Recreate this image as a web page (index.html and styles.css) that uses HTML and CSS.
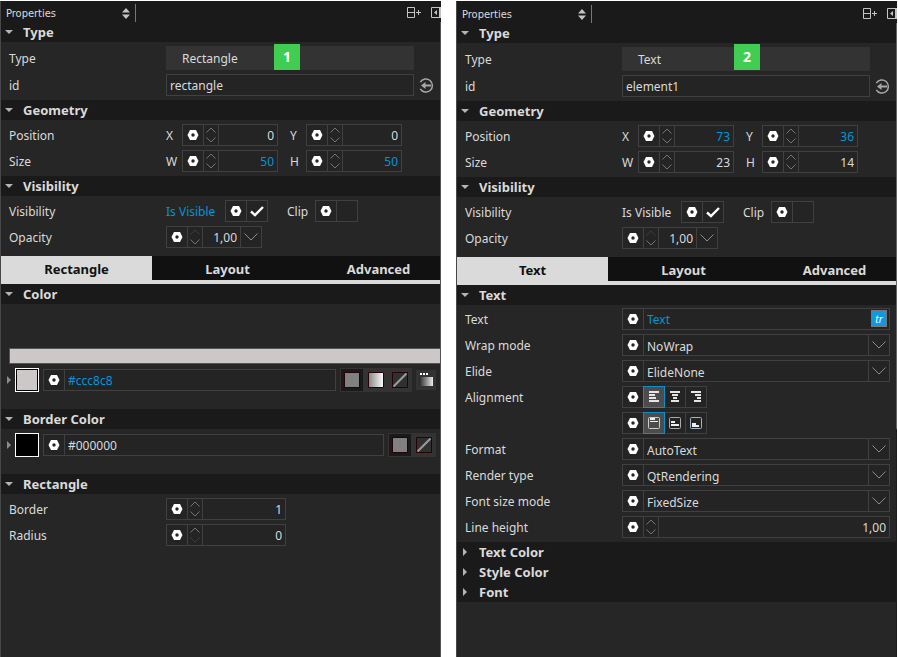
FILE: index.html
```html
<!DOCTYPE html>
<html lang="en">
<head>
<meta charset="utf-8">
<title>Properties</title>
<link rel="stylesheet" href="styles.css">
</head>
<body>
<svg class="defs" aria-hidden="true">
  <symbol id="hex" viewBox="0 0 12 10"><path fill="#fff" fill-rule="evenodd" d="M.5 5 3 0h6l2.500 5L9 10H3zM6 3.300a1.700 1.700 0 1 0 0 3.400a1.700 1.700 0 1 0 0-3.400z"/></symbol>
  <symbol id="up" viewBox="0 0 10 6"><path class="line" d="M.5 5.500 5 1l4.500 4.500"/></symbol>
  <symbol id="down" viewBox="0 0 10 6"><path class="line" d="M.5.5 5 5 9.500.5"/></symbol>
  <symbol id="chev" viewBox="0 0 14 8"><path class="line" d="M.5.5 7 7 13.500.5"/></symbol>
  <symbol id="check" viewBox="0 0 14 11"><path d="M1 5.500 5 9.200 13 1" fill="none" stroke="#fff" stroke-width="2.400"/></symbol>
  <symbol id="sort" viewBox="0 0 8 11"><path fill="#c4c4c4" d="M4 0l4 4.500H0zM4 11 0 6.500h8z"/></symbol>
  <symbol id="split" viewBox="0 0 15 12"><path fill="none" stroke="#c4c4c4" d="M.5.5h7v10h-7zM.5 5.500h7M9 5.500h5M11.500 3v5"/></symbol>
  <symbol id="dock" viewBox="0 0 10 12"><path fill="none" stroke="#c4c4c4" d="M9 .5H.5v10H9"/><path fill="#c4c4c4" d="M6 3v5L3 5.500zM8 0h2v11H8z"/></symbol>
  <symbol id="reset" viewBox="0 0 15 15"><path fill="none" stroke="#a8a8a8" stroke-width="1.500" d="M1.300 4.200A6.500 6.500 0 1 1 1.300 10.800"/><path fill="#a8a8a8" d="M2 7.500 6.500 4v2.500H12v2H6.500V11z"/></symbol>
  <symbol id="slash" viewBox="0 0 16 16"><path fill="#303030" stroke="#260205" d="M.5.5h15v15H.5z"/><path stroke="#999" stroke-width="2.200" d="M1.500 14.500l13-13"/></symbol>
  <symbol id="solid" viewBox="0 0 16 16"><path fill="#808080" stroke="#260205" d="M.5.5h15v15H.5z"/></symbol>
  <symbol id="grad" viewBox="0 0 16 16"><path fill="url(#g1)" stroke="#260205" d="M.5.5h15v15H.5z"/></symbol>
  <symbol id="stops" viewBox="0 0 14 14"><path fill="#fff" d="M1 0h2v2H1zM4 0h2v2H4zM7 0h2v2H7z"/><path fill="url(#g2)" d="M0 4h14v9H0z"/></symbol>
  <symbol id="al" viewBox="0 0 12 12"><path fill="#e4e4e4" d="M1 0h10v2H1zM1 3h6v2H1zM1 6h7v2H1zM1 9h10v2H1z"/></symbol>
  <symbol id="ac" viewBox="0 0 12 12"><path fill="#e4e4e4" d="M1 0h10v2H1zM3 3h6v2H3zM4 6h4v2H4zM2 9h8v2H2z"/></symbol>
  <symbol id="ar" viewBox="0 0 12 12"><path fill="#e4e4e4" d="M1 0h10v2H1zM5 3h6v2H5zM7 6h4v2H7zM4 9h7v2H4z"/></symbol>
  <symbol id="vt" viewBox="0 0 12 12"><rect x=".5" y=".5" width="11" height="11" rx="1" fill="none" stroke="#ccc"/><path fill="#eee" d="M2 1h5v2H2zM2 4h8v1H2z"/></symbol>
  <symbol id="vm" viewBox="0 0 12 12"><rect x=".5" y=".5" width="11" height="11" rx="1" fill="none" stroke="#aaa"/><path fill="#eee" d="M2 4h4v2H2zM2 7h8v2H2z"/></symbol>
  <symbol id="vb" viewBox="0 0 12 12"><rect x=".5" y=".5" width="11" height="11" rx="1" fill="none" stroke="#a4b4c4"/><path fill="#eee" d="M2 6h4v2H2zM2 8h7v2H2z"/></symbol>
  <linearGradient id="g1"><stop stop-color="#858585"/><stop offset="1" stop-color="#fff"/></linearGradient>
  <linearGradient id="g2"><stop stop-color="#252222"/><stop offset="1" stop-color="#eee"/></linearGradient>
</svg>

<main class="page">
<section class="panel" aria-label="Rectangle properties">
  <header class="toolbar">
    <label class="view"><select aria-label="View"><option>Properties</option></select><svg width="8" height="11"><use href="#sort"/></svg></label>
    <div class="tools">
      <button aria-label="Split"><svg width="15" height="12"><use href="#split"/></svg></button>
      <button aria-label="Close"><svg width="10" height="12"><use href="#dock"/></svg></button>
    </div>
  </header>
  <div class="props">
    <h2><button class="head open">Type</button></h2>
    <div class="body">
      <div class="row tall"><span class="name">Type</span><button class="type">Rectangle</button><span class="badge">1</span></div>
      <div class="row"><label class="name" for="id1">id</label><span class="box idbox"><input id="id1" value="rectangle"></span><button class="reset" aria-label="Reset id"><svg width="15" height="15"><use href="#reset"/></svg></button></div>
    </div>
    <h2><button class="head open">Geometry</button></h2>
    <div class="body">
      <div class="row"><span class="name">Position</span>
        <label class="axis" for="x1">X</label><span class="box num"><button class="hex" aria-label="Actions"><svg><use href="#hex"/></svg></button><span class="spin"><button aria-label="Increase"><svg><use href="#up"/></svg></button><button aria-label="Decrease"><svg><use href="#down"/></svg></button></span><input id="x1" value="0"></span>
        <label class="axis second" for="y1">Y</label><span class="box num"><button class="hex" aria-label="Actions"><svg><use href="#hex"/></svg></button><span class="spin"><button aria-label="Increase"><svg><use href="#up"/></svg></button><button aria-label="Decrease"><svg><use href="#down"/></svg></button></span><input id="y1" value="0"></span>
      </div>
      <div class="row"><span class="name">Size</span>
        <label class="axis" for="w1">W</label><span class="box num"><button class="hex" aria-label="Actions"><svg><use href="#hex"/></svg></button><span class="spin"><button aria-label="Increase"><svg><use href="#up"/></svg></button><button aria-label="Decrease"><svg><use href="#down"/></svg></button></span><input class="set" id="w1" value="50"></span>
        <label class="axis second" for="h1">H</label><span class="box num"><button class="hex" aria-label="Actions"><svg><use href="#hex"/></svg></button><span class="spin"><button aria-label="Increase"><svg><use href="#up"/></svg></button><button aria-label="Decrease"><svg><use href="#down"/></svg></button></span><input class="set" id="h1" value="50"></span>
      </div>
    </div>
    <h2><button class="head open">Visibility</button></h2>
    <div class="body last">
      <div class="row"><span class="name">Visibility</span>
        <label class="vis set" for="v1">Is Visible</label><span class="box"><button class="hex" aria-label="Actions"><svg><use href="#hex"/></svg></button><span class="tick"><input type="checkbox" id="v1" checked><svg width="14" height="11"><use href="#check"/></svg></span></span>
        <label class="clip" for="c1">Clip</label><span class="box"><button class="hex" aria-label="Actions"><svg><use href="#hex"/></svg></button><span class="tick"><input type="checkbox" id="c1"></span></span>
      </div>
      <div class="row"><label class="name" for="o1">Opacity</label><span class="box opacity"><button class="hex" aria-label="Actions"><svg><use href="#hex"/></svg></button><span class="spin"><button class="off" aria-label="Increase"><svg><use href="#up"/></svg></button><button aria-label="Decrease"><svg><use href="#down"/></svg></button></span><input id="o1" value="1,00"><button class="drop" aria-label="Slider"><svg><use href="#chev"/></svg></button></span></div>
    </div>
    <div class="tabs" role="tablist"><button role="tab" aria-selected="true">Rectangle</button><button role="tab">Layout</button><button role="tab">Advanced</button></div>
    <h2><button class="head open">Color</button></h2>
    <div class="colors">
      <div class="bar"></div>
      <div class="crow"><button class="more" aria-label="Expand"></button><button class="swatch gray" aria-label="Color"></button><span class="box grow"><button class="hex" aria-label="Actions"><svg><use href="#hex"/></svg></button><input class="set" aria-label="Color value" value="#ccc8c8"></span>
        <span class="modes"><button class="on" aria-label="Solid"><svg><use href="#solid"/></svg></button><button aria-label="Gradient"><svg><use href="#grad"/></svg></button><button aria-label="None"><svg><use href="#slash"/></svg></button></span>
        <button class="picker" aria-label="Gradient presets"><svg width="14" height="14"><use href="#stops"/></svg></button></div>
    </div>
    <h2><button class="head open">Border Color</button></h2>
    <div class="colors">
      <div class="crow"><button class="more" aria-label="Expand"></button><button class="swatch black" aria-label="Border color"></button><span class="box grow"><button class="hex" aria-label="Actions"><svg><use href="#hex"/></svg></button><input aria-label="Border color value" value="#000000"></span>
        <span class="modes"><button class="on" aria-label="Solid"><svg><use href="#solid"/></svg></button><button aria-label="None"><svg><use href="#slash"/></svg></button></span></div>
    </div>
    <h2><button class="head open">Rectangle</button></h2>
    <div class="body">
      <div class="row"><label class="name" for="b1">Border</label><span class="box wide"><button class="hex" aria-label="Actions"><svg><use href="#hex"/></svg></button><span class="spin"><button aria-label="Increase"><svg><use href="#up"/></svg></button><button aria-label="Decrease"><svg><use href="#down"/></svg></button></span><input id="b1" value="1"></span></div>
      <div class="row"><label class="name" for="r1">Radius</label><span class="box wide"><button class="hex" aria-label="Actions"><svg><use href="#hex"/></svg></button><span class="spin"><button aria-label="Increase"><svg><use href="#up"/></svg></button><button class="off" aria-label="Decrease"><svg><use href="#down"/></svg></button></span><input id="r1" value="0"></span></div>
    </div>
  </div>
</section>

<section class="panel text-panel" aria-label="Text properties">
  <header class="toolbar">
    <label class="view"><select aria-label="View"><option>Properties</option></select><svg width="8" height="11"><use href="#sort"/></svg></label>
    <div class="tools">
      <button aria-label="Split"><svg width="15" height="12"><use href="#split"/></svg></button>
      <button aria-label="Close"><svg width="10" height="12"><use href="#dock"/></svg></button>
    </div>
  </header>
  <div class="props">
    <h2><button class="head open">Type</button></h2>
    <div class="body">
      <div class="row tall"><span class="name">Type</span><button class="type">Text</button><span class="badge">2</span></div>
      <div class="row"><label class="name" for="id2">id</label><span class="box idbox"><input id="id2" value="element1"></span><button class="reset" aria-label="Reset id"><svg width="15" height="15"><use href="#reset"/></svg></button></div>
    </div>
    <h2><button class="head open">Geometry</button></h2>
    <div class="body">
      <div class="row"><span class="name">Position</span>
        <label class="axis" for="x2">X</label><span class="box num"><button class="hex" aria-label="Actions"><svg><use href="#hex"/></svg></button><span class="spin"><button aria-label="Increase"><svg><use href="#up"/></svg></button><button aria-label="Decrease"><svg><use href="#down"/></svg></button></span><input class="set" id="x2" value="73"></span>
        <label class="axis second" for="y2">Y</label><span class="box num"><button class="hex" aria-label="Actions"><svg><use href="#hex"/></svg></button><span class="spin"><button aria-label="Increase"><svg><use href="#up"/></svg></button><button aria-label="Decrease"><svg><use href="#down"/></svg></button></span><input class="set" id="y2" value="36"></span>
      </div>
      <div class="row"><span class="name">Size</span>
        <label class="axis" for="w2">W</label><span class="box num"><button class="hex" aria-label="Actions"><svg><use href="#hex"/></svg></button><span class="spin"><button aria-label="Increase"><svg><use href="#up"/></svg></button><button aria-label="Decrease"><svg><use href="#down"/></svg></button></span><input id="w2" value="23"></span>
        <label class="axis second" for="h2">H</label><span class="box num"><button class="hex" aria-label="Actions"><svg><use href="#hex"/></svg></button><span class="spin"><button aria-label="Increase"><svg><use href="#up"/></svg></button><button aria-label="Decrease"><svg><use href="#down"/></svg></button></span><input id="h2" value="14"></span>
      </div>
    </div>
    <h2><button class="head open">Visibility</button></h2>
    <div class="body last">
      <div class="row"><span class="name">Visibility</span>
        <label class="vis" for="v2">Is Visible</label><span class="box"><button class="hex" aria-label="Actions"><svg><use href="#hex"/></svg></button><span class="tick"><input type="checkbox" id="v2" checked><svg width="14" height="11"><use href="#check"/></svg></span></span>
        <label class="clip" for="c2">Clip</label><span class="box"><button class="hex" aria-label="Actions"><svg><use href="#hex"/></svg></button><span class="tick"><input type="checkbox" id="c2"></span></span>
      </div>
      <div class="row"><label class="name" for="o2">Opacity</label><span class="box opacity"><button class="hex" aria-label="Actions"><svg><use href="#hex"/></svg></button><span class="spin"><button class="off" aria-label="Increase"><svg><use href="#up"/></svg></button><button aria-label="Decrease"><svg><use href="#down"/></svg></button></span><input id="o2" value="1,00"><button class="drop" aria-label="Slider"><svg><use href="#chev"/></svg></button></span></div>
    </div>
    <div class="tabs" role="tablist"><button role="tab" aria-selected="true">Text</button><button role="tab">Layout</button><button role="tab">Advanced</button></div>
    <h2><button class="head open">Text</button></h2>
    <div class="body text-body">
      <div class="row"><label class="name" for="t2">Text</label><span class="box grow"><button class="hex" aria-label="Actions"><svg><use href="#hex"/></svg></button><input class="set" id="t2" value="Text"><button class="tr">tr</button></span></div>
      <div class="row"><label class="name" for="wm">Wrap mode</label><span class="box grow"><button class="hex" aria-label="Actions"><svg><use href="#hex"/></svg></button><select id="wm"><option>NoWrap</option></select><span class="drop"><svg><use href="#chev"/></svg></span></span></div>
      <div class="row"><label class="name" for="el">Elide</label><span class="box grow"><button class="hex" aria-label="Actions"><svg><use href="#hex"/></svg></button><select id="el"><option>ElideNone</option></select><span class="drop"><svg><use href="#chev"/></svg></span></span></div>
      <div class="row"><span class="name">Alignment</span><span class="box"><button class="hex" aria-label="Actions"><svg><use href="#hex"/></svg></button><button class="align on" aria-label="Left"><svg width="12" height="12"><use href="#al"/></svg></button><button class="align" aria-label="Center"><svg width="12" height="12"><use href="#ac"/></svg></button><button class="align" aria-label="Right"><svg width="12" height="12"><use href="#ar"/></svg></button></span></div>
      <div class="row"><span class="name"></span><span class="box"><button class="hex" aria-label="Actions"><svg><use href="#hex"/></svg></button><button class="align on" aria-label="Top"><svg width="12" height="12"><use href="#vt"/></svg></button><button class="align" aria-label="Middle"><svg width="12" height="12"><use href="#vm"/></svg></button><button class="align" aria-label="Bottom"><svg width="12" height="12"><use href="#vb"/></svg></button></span></div>
      <div class="row"><label class="name" for="fo">Format</label><span class="box grow"><button class="hex" aria-label="Actions"><svg><use href="#hex"/></svg></button><select id="fo"><option>AutoText</option></select><span class="drop"><svg><use href="#chev"/></svg></span></span></div>
      <div class="row"><label class="name" for="rt">Render type</label><span class="box grow"><button class="hex" aria-label="Actions"><svg><use href="#hex"/></svg></button><select id="rt"><option>QtRendering</option></select><span class="drop"><svg><use href="#chev"/></svg></span></span></div>
      <div class="row"><label class="name" for="fs">Font size mode</label><span class="box grow"><button class="hex" aria-label="Actions"><svg><use href="#hex"/></svg></button><select id="fs"><option>FixedSize</option></select><span class="drop"><svg><use href="#chev"/></svg></span></span></div>
      <div class="row"><label class="name" for="lh">Line height</label><span class="box grow"><button class="hex" aria-label="Actions"><svg><use href="#hex"/></svg></button><span class="spin"><button aria-label="Increase"><svg><use href="#up"/></svg></button><button aria-label="Decrease"><svg><use href="#down"/></svg></button></span><input id="lh" value="1,00"></span></div>
    </div>
    <h2><button class="head">Text Color</button></h2>
    <h2><button class="head">Style Color</button></h2>
    <h2><button class="head">Font</button></h2>
  </div>
</section>
</main>
</body>
</html>
```
FILE: styles.css
```css
* { box-sizing: border-box; }

body {
  margin: 0;
  background: #fff;
  color: #dadada;
  font: 12px/20px "Noto Sans", sans-serif;
}

.defs { position: absolute; width: 0; height: 0; }

button, input, select {
  margin: 0;
  padding: 0;
  border: 0;
  border-radius: 0;
  outline: 0;
  background: none;
  color: inherit;
  font: inherit;
  appearance: none;
}

svg { display: block; flex: none; }
.line { fill: none; stroke: currentColor; }
h2 { margin: 0; font-size: 13px; }

.page {
  display: flex;
  gap: 15px;
  min-height: 100vh;
  padding: 1px 1px 0 0;
}

.panel {
  display: flex;
  flex-direction: column;
  flex: 1 1 0;
  min-width: 0;
  overflow: hidden;
  background: #262626;
  border-left: 1px solid #484848;
}

/* Toolbar */
.toolbar {
  display: flex;
  justify-content: space-between;
  align-items: center;
  height: 21px;
  padding: 3px 0 0 5px;
  background: #1a1a1a;
}
.text-panel .toolbar { height: 22px; padding-top: 4px; }
.view {
  display: flex;
  align-items: center;
  width: 130px;
  height: 18px;
  padding-right: 5px;
  border-right: 1px solid #777;
}
.view select {
  flex: 1;
  padding-top: 1px;
  font: 11px/18px "DejaVu Sans Condensed", "DejaVu Sans", sans-serif;
}
.tools { display: flex; gap: 9px; }

.props { flex: 1; border-right: 1px solid #555; }
.text-panel .props {
  border-image: linear-gradient(#666 64%, #1c1c1c 64%) 1;
  border-left: 0;
}

/* Section headers */
.head {
  display: flex;
  align-items: center;
  width: 100%;
  height: 20px;
  padding-left: 4px;
  background: #1a1a1a;
  font-weight: bold;
  line-height: 20px;
}
.head::before {
  content: "";
  width: 8px;
  height: 8px;
  margin-right: 10px;
  background: #b4b4b4;
  clip-path: polygon(2px 0, 6px 4px, 2px 8px);
}
.head.open::before { clip-path: polygon(0 2px, 8px 2px, 4px 6px); }

/* Rows */
.body {
  display: flex;
  flex-direction: column;
  gap: 4px;
  padding: 4px 6px 4px 8px;
}
.body.last { padding-bottom: 8px; }
.text-body { padding-top: 3px; }
.row {
  position: relative;
  display: flex;
  align-items: center;
  height: 22px;
}
.row.tall { height: 24px; }
.name { flex: none; width: 157px; }
.name, .axis, .vis, .clip { padding-top: 2px; }
.set { color: #0094d8; }

.type {
  width: 248px;
  height: 24px;
  padding: 2px 0 0 16px;
  background: #333;
  text-align: left;
}
.badge {
  position: absolute;
  left: 265px;
  bottom: 0;
  width: 26px;
  height: 26px;
  background: #41cd52;
  color: #fff;
  font-size: 14px;
  font-weight: bold;
  line-height: 26px;
  text-align: center;
}
.text-panel .badge { left: 269px; bottom: 1px; }

.box {
  display: flex;
  height: 22px;
  background: #242424;
  border: 1px solid #404040;
}
.box input, .box select {
  flex: 1;
  width: 0;
  min-width: 0;
  padding: 2px 3px 0;
}
.idbox { width: 248px; }
.num { width: 96px; }
.wide { width: 120px; }
.opacity { width: 96px; }
.grow { flex: 1; }
.spin + input { text-align: right; }

.hex {
  display: grid;
  place-items: center;
  flex: none;
  width: 21px;
  border-right: 1px solid #404040;
}
.hex svg { width: 12px; height: 10px; }
.spin {
  display: flex;
  flex-direction: column;
  justify-content: space-between;
  flex: none;
  width: 15px;
  padding: 2px;
  border-right: 1px solid #404040;
  color: #78707a;
}
.spin button { height: 6px; }
.spin svg { width: 10px; height: 6px; }
.spin .off { color: #3c3c3c; }

.drop {
  display: grid;
  place-items: center;
  flex: none;
  width: 21px;
  border-left: 1px solid #404040;
  color: #8c8c8c;
}
.drop svg { width: 14px; height: 8px; }

.axis { width: 16px; }
.axis.second { margin-left: 12px; }
.vis { width: 59px; }
.clip { width: 28px; margin-left: 19px; }

.tick { display: grid; place-items: center; width: 20px; }
.tick > * { grid-area: 1 / 1; }
.tick input { width: 20px; height: 20px; }
.tick svg { pointer-events: none; }

.reset { margin-left: 5px; }

.align {
  display: grid;
  place-items: center;
  width: 21px;
  border-right: 1px solid #404040;
}
.align:last-child { width: 20px; border-right: 0; }
.align.on {
  width: 22px;
  margin: -1px 0 -1px -1px;
  background: #4c4c4c;
  border: 1px solid #0f8ccb;
}

.tr {
  width: 16px;
  height: 17px;
  margin: 1px 2px;
  background: #0f9ae0;
  border: 1px solid #777;
  color: #fff;
  font-size: 10px;
  font-style: italic;
  line-height: 14px;
}

/* Tabs overflow the panel slightly and are cut at its edge */
.tabs {
  display: flex;
  overflow: hidden;
  background: #111;
  border-bottom: 4px solid #dadada;
}
.tabs button {
  flex: 0 0 34.4%;
  height: 24px;
  padding-top: 2px;
  font-size: 13px;
  font-weight: bold;
  line-height: 22px;
}
.tabs [aria-selected="true"] { background: #dadada; color: #111; }

/* Colors */
.colors { padding: 4px 4px 17px 5px; }
.bar {
  height: 16px;
  margin: 40px -4px 4px 3px;
  background: #ccc8c8;
  border: 1px solid #555;
  border-right: 0;
}
.crow { display: flex; align-items: center; gap: 4px; height: 24px; }
.more {
  width: 5px;
  height: 8px;
  background: #8c8c8c;
  clip-path: polygon(1px 0, 5px 4px, 1px 8px);
}
.swatch {
  width: 24px;
  height: 24px;
  border: 1px solid #fff;
  box-shadow: inset 0 0 0 1px #000;
}
.gray { background: #ccc8c8; }
.black { background: #000; }
.modes { display: flex; }
.modes button {
  display: grid;
  place-items: center;
  width: 24px;
  height: 24px;
  background: #333;
}
.modes .on { background: #1a1a1a; box-shadow: inset 0 0 0 1px #333; }
.modes svg { width: 16px; height: 16px; }
.picker {
  display: grid;
  place-items: center;
  width: 20px;
  height: 20px;
  background: #333;
}
```
